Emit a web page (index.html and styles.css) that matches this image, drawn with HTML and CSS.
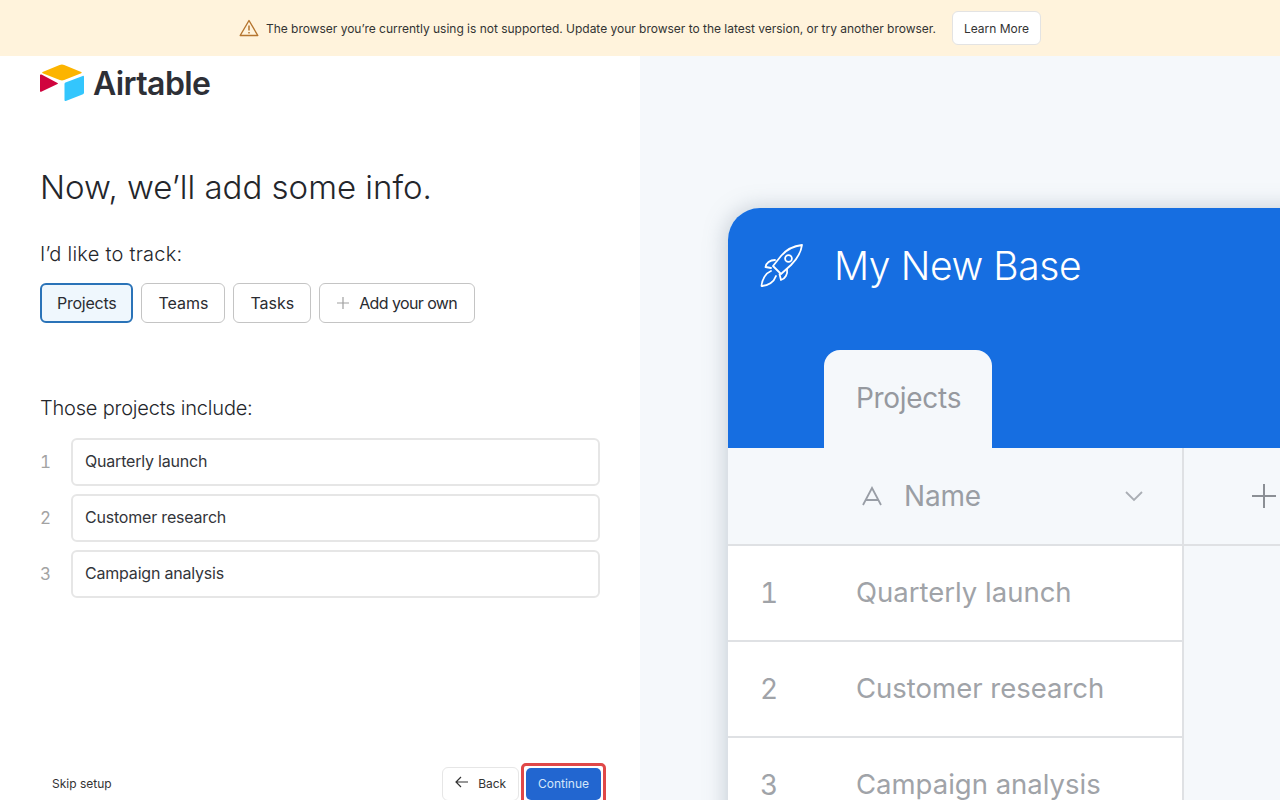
FILE: index.html
```html
<!doctype html>
<html lang="en">
  <head>
    <meta charset="UTF-8" />
    <title>Airtable - Onboarding</title>
    <link rel="stylesheet" href="styles.css">
  </head>

  <body>
    <div class="banner">
      <svg class="banner-icon" width="20" height="18" viewBox="0 0 20 18" fill="none" stroke="#b5752f" stroke-width="1.4" stroke-linejoin="round">
        <path d="M10 1.5 L18.8 16.5 H1.2 Z" />
        <path d="M10 6.5 V11.5 M10 13 V14.4" stroke-width="1.5" />
      </svg>
      <span class="banner-text">The browser you’re currently using is not supported. Update your browser to the latest version, or try another browser.</span>
      <button class="learn-more">Learn More</button>
    </div>

    <div class="page">
      <div class="left">
        <div class="logo">
          <svg width="44" height="38" viewBox="0 0 44 38">
            <path d="M19.6 1 L2.6 8 Q1.6 8.6 2.6 9.2 L19.8 16 Q22 16.8 24.2 16 L41.2 9.2 Q42.4 8.6 41.2 8 L24.2 1 Q22 0 19.6 1 Z" fill="#fcb400" />
            <path d="M24.5 20 L24.5 36 Q24.5 37.4 25.8 36.9 L43 30.2 Q44 29.7 44 28.8 V12.8 Q44 11.4 42.7 11.9 L25.5 18.6 Q24.5 19 24.5 20 Z" fill="#33c6fd" />
            <path d="M0 11.2 V27 Q0 28.2 1.2 27.7 L17.5 20 Q18.6 19.4 17.5 18.9 L1.5 10.6 Q0 10 0 11.2 Z" fill="#d0043e" />
          </svg>
          <span class="logo-text">Airtable</span>
        </div>

        <h1 class="title">Now, we’ll add some info.</h1>

        <p class="label">I’d like to track:</p>
        <div class="chips">
          <button class="chip selected">Projects</button>
          <button class="chip">Teams</button>
          <button class="chip">Tasks</button>
          <button class="chip add-chip">
            <svg width="12" height="12" viewBox="0 0 12 12" stroke="#a0a0a0" stroke-width="1.2"><path d="M6 0 V12 M0 6 H12" /></svg>
            Add your own
          </button>
        </div>

        <p class="label include-label">Those projects include:</p>
        <div class="items">
          <div class="item"><span class="item-num">1</span><div class="item-input">Quarterly launch</div></div>
          <div class="item"><span class="item-num">2</span><div class="item-input">Customer research</div></div>
          <div class="item"><span class="item-num">3</span><div class="item-input">Campaign analysis</div></div>
        </div>

        <div class="footer">
          <span class="skip">Skip setup</span>
          <div class="footer-buttons">
            <button class="back">
              <svg width="14" height="12" viewBox="0 0 14 12" fill="none" stroke="#333" stroke-width="1.2"><path d="M13 6 H1 M6 1 L1 6 L6 11" /></svg>
              Back
            </button>
            <div class="continue-ring"><button class="continue">Continue</button></div>
          </div>
        </div>
      </div>

      <div class="right">
        <div class="mock">
          <div class="mock-head">
            <div class="mock-title">
              <svg width="46" height="46" viewBox="0 0 46 46" fill="none" stroke="#fff" stroke-width="1.8" stroke-linejoin="round" stroke-linecap="round">
                <path d="M43 2 C34 3 27 7 22 13 L14 23 L22 31 L32 22 C38 16 42 10 43 2 Z" />
                <circle cx="29.5" cy="15.5" r="3.4" />
                <path d="M16 17 C11 17 7 20 6.5 24 L12 25" />
                <path d="M28 26 C29 31 26 36 22 37 L20.5 31" />
                <path d="M12 28 C7 30 3 36 2.5 43 C9 43 15 39 17 33" />
              </svg>
              <span>My New Base</span>
            </div>
            <div class="mock-tab">Projects</div>
          </div>
          <div class="grid-head">
            <div class="name-col">
              <svg width="22" height="22" viewBox="0 0 22 22" fill="none" stroke="#999ea6" stroke-width="1.8"><path d="M2 20 L11 3 L20 20 M5 15 H17" /></svg>
              <span>Name</span>
              <svg class="chevron" width="20" height="12" viewBox="0 0 20 12" fill="none" stroke="#aaaeb4" stroke-width="1.8"><path d="M2 2 L10 10 L18 2" /></svg>
            </div>
            <div class="add-col">
              <svg width="24" height="24" viewBox="0 0 24 24" stroke="#8b8f95" stroke-width="2"><path d="M12 0 V24 M0 12 H24" /></svg>
            </div>
          </div>
          <div class="grid-row"><div class="row-cell"><span class="row-num">1</span><span>Quarterly launch</span></div><div class="row-rest"></div></div>
          <div class="grid-row"><div class="row-cell"><span class="row-num">2</span><span>Customer research</span></div><div class="row-rest"></div></div>
          <div class="grid-row"><div class="row-cell"><span class="row-num">3</span><span>Campaign analysis</span></div><div class="row-rest"></div></div>
        </div>
      </div>
    </div>
  </body>
</html>
```

FILE: styles.css
```css
html,
body {
  margin: 0;
  padding: 0;
  height: 100%;
  overflow: hidden;
}

body {
  display: flex;
  flex-direction: column;
  font-family: Inter, "Liberation Sans", sans-serif;
  color: #24262b;
  background: white;
}

button {
  font-family: inherit;
  background: white;
  cursor: pointer;
}

.banner {
  flex: none;
  height: 56px;
  display: flex;
  align-items: center;
  justify-content: center;
  background: #fff3dc;
}

.banner-icon {
  margin-right: 7px;
}

.banner-text {
  font-size: 12px;
  letter-spacing: -0.015px;
  color: #333;
}

.learn-more {
  margin-left: 16px;
  height: 34px;
  width: 89px;
  padding: 0;
  font-size: 12px;
  color: #333;
  border: 1px solid #e3e3e3;
  border-radius: 6px;
}

.page {
  flex: 1;
  display: flex;
  min-height: 0;
}

.left {
  width: 640px;
  box-sizing: border-box;
  padding: 8px 40px 0;
  display: flex;
  flex-direction: column;
}

.logo {
  display: flex;
  align-items: center;
  gap: 9px;
  height: 38px;
}

.logo-text {
  font-size: 32px;
  font-weight: 600;
  letter-spacing: -0.6px;
  color: #2d2f36;
}

.title {
  margin: 63px 0 0;
  font-size: 33px;
  line-height: 44px;
  font-weight: 350;
  letter-spacing: 0;
}

.label {
  margin: 33px 0 0;
  font-size: 20px;
  line-height: 24px;
  font-weight: 350;
  letter-spacing: 0.25px;
}

.chips {
  display: flex;
  gap: 8px;
  margin-top: 17px;
}

.chip {
  height: 40px;
  padding: 0 16px;
  font-size: 16px;
  color: #2a2c31;
  border: 1px solid #c4c4c4;
  border-radius: 6px;
}

.chip.selected {
  padding: 0 15px;
  letter-spacing: -0.25px;
  background: #eff7fd;
  border: 2px solid #2a73b8;
}

.add-chip {
  padding: 0 17px;
  letter-spacing: -0.6px;
}

.add-chip svg {
  margin-right: 6px;
}

.include-label {
  margin-top: 73px;
  letter-spacing: -0.2px;
}

.items {
  display: flex;
  flex-direction: column;
  gap: 8px;
  margin-top: 18px;
}

.item {
  display: flex;
  align-items: center;
}

.item-num {
  width: 31px;
  font-size: 17px;
  font-variant-numeric: tabular-nums;
  color: #a3a3a3;
}

.item-input {
  flex: 1;
  height: 44px;
  line-height: 42px;
  padding: 0 12px;
  font-size: 16px;
  letter-spacing: -0.2px;
  color: #33353a;
  border: 2px solid #e6e6e6;
  border-radius: 6px;
}

.footer {
  margin-top: auto;
  margin-bottom: -5px;
  display: flex;
  align-items: center;
  justify-content: space-between;
  padding-left: 12px;
}

.skip {
  font-size: 12px;
  line-height: 14px;
  margin-bottom: 1px;
  color: #333;
}

.footer-buttons {
  display: flex;
  align-items: center;
  gap: 2px;
  margin-right: -6px;
}

.back {
  height: 34px;
  width: 77px;
  padding: 0 0 2px;
  font-size: 12px;
  color: #333;
  border: 1px solid #e6e6e6;
  border-radius: 6px;
}

.back svg {
  margin-right: 6px;
}

.continue-ring {
  display: flex;
  padding: 2px;
  border: 3px solid #e04848;
  border-radius: 5px;
  height: 32px;
  box-sizing: content-box;
}

.continue {
  width: 75px;
  height: 32px;
  padding: 0 0 2px;
  font-size: 12px;
  color: #d4e6fa;
  background: #2266d0;
  border: 0;
  border-radius: 5px;
}

.right {
  flex: 1;
  background: #f5f8fb;
  padding: 152px 0 0 88px;
  overflow: hidden;
}

.mock {
  width: 700px;
  background: white;
  border-radius: 32px 0 0 0;
  box-shadow: -2px 0 22px rgba(110, 125, 145, 0.35);
  overflow: hidden;
}

.mock-head {
  height: 240px;
  background: #166ee1;
  display: flex;
  flex-direction: column;
  justify-content: space-between;
}

.mock-title {
  display: flex;
  align-items: center;
  padding: 35px 0 0 31px;
  gap: 29px;
  font-size: 39px;
  font-weight: 350;
  letter-spacing: -0.4px;
  line-height: 46px;
  color: white;
}

.mock-tab {
  align-self: flex-start;
  margin-left: 96px;
  width: 168px;
  height: 98px;
  box-sizing: border-box;
  padding: 30px 0 0 32px;
  font-size: 28px;
  letter-spacing: -0.3px;
  line-height: 36px;
  color: #96999f;
  background: #f5f8fb;
  border-radius: 16px 16px 0 0;
}

.grid-head {
  display: flex;
  height: 98px;
  box-sizing: border-box;
  background: #f5f8fb;
  border-bottom: 2px solid #dfe1e4;
}

.name-col {
  width: 456px;
  flex: none;
  box-sizing: border-box;
  display: flex;
  align-items: center;
  padding: 0 38px 0 133px;
  font-size: 28px;
  letter-spacing: -0.2px;
  color: #9a9ea4;
  border-right: 2px solid #dfe1e4;
}

.name-col span {
  margin-left: 21px;
}

.chevron {
  margin-left: auto;
}

.add-col {
  padding: 36px 0 0 68px;
}

.grid-row {
  display: flex;
  height: 96px;
  box-sizing: border-box;
}

.row-cell {
  width: 456px;
  flex: none;
  box-sizing: border-box;
  display: flex;
  align-items: center;
  padding-bottom: 2px;
  font-size: 27.5px;
  color: #a0a3a8;
  background: white;
  border-right: 2px solid #dfe1e4;
  border-bottom: 2px solid #dfe1e4;
}

.row-num {
  width: 128px;
  padding: 1px 0 0 32px;
  box-sizing: border-box;
  font-size: 28px;
  font-variant-numeric: tabular-nums;
  color: #a0a3a8;
}

.row-rest {
  flex: 1;
  background: #f5f8fb;
}
```
